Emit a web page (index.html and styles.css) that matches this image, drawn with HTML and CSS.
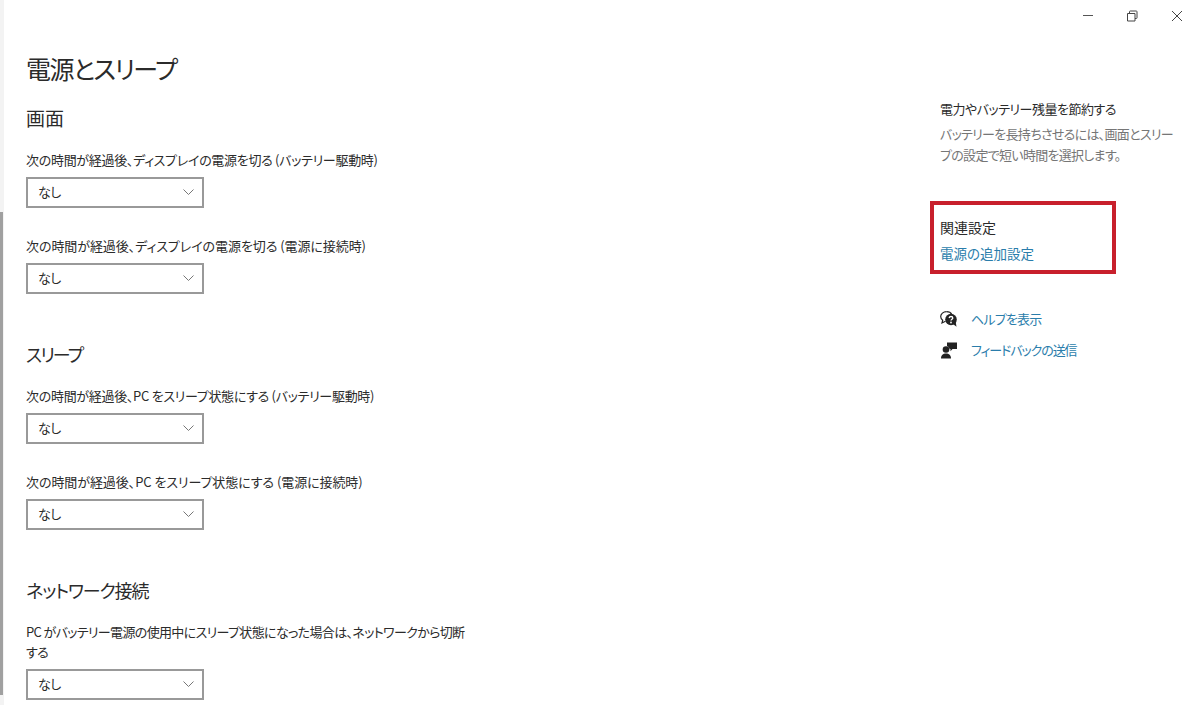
FILE: index.html
```html
<!DOCTYPE html>
<html lang="ja">
<head>
	<meta charset="utf-8">
	<title>電源とスリープ</title>
	<link rel="stylesheet" href="styles.css">
</head>
<body>
<div class="window">
	<div class="scrollbar"><div class="thumb"></div></div>

	<div class="titlebar">
		<svg class="winbtn" width="46" height="32" viewBox="0 0 46 32"><path d="M21 15.500h10" stroke="#555" fill="none"/></svg>
		<svg class="winbtn" width="46" height="32" viewBox="0 0 46 32"><path d="M19.500 13.500h7.500v7.500h-7.500zM21.500 13.500v-1.800q0-.7.7-.7h6.100q.7 0 .7.7v6.100q0 .7-.7.7h-1.300" stroke="#444" fill="none"/></svg>
		<svg class="winbtn" width="46" height="32" viewBox="0 0 46 32"><path d="M18 11l10 10M28 11l-10 10" stroke="#444" fill="none"/></svg>
	</div>

	<main class="content">
		<h1>電源とスリープ</h1>

		<section class="group">
			<h2 class="kanji">画面</h2>
			<div class="field">
				<p>次の時間が経過後、ディスプレイの電源を切る (バッテリー駆動時)</p>
				<div class="select">なし<svg width="11" height="6" viewBox="0 0 11 6"><path d="M.5.5L5.500 5.500 10.500.5" stroke="#777" fill="none"/></svg></div>
			</div>
			<div class="field">
				<p class="plugged">次の時間が経過後、ディスプレイの電源を切る (電源に接続時)</p>
				<div class="select">なし<svg width="11" height="6" viewBox="0 0 11 6"><path d="M.5.5L5.500 5.500 10.500.5" stroke="#777" fill="none"/></svg></div>
			</div>
		</section>

		<section class="group">
			<h2 class="sleep">スリープ</h2>
			<div class="field">
				<p>次の時間が経過後、PC をスリープ状態にする (バッテリー駆動時)</p>
				<div class="select">なし<svg width="11" height="6" viewBox="0 0 11 6"><path d="M.5.5L5.500 5.500 10.500.5" stroke="#777" fill="none"/></svg></div>
			</div>
			<div class="field">
				<p class="plugged">次の時間が経過後、PC をスリープ状態にする (電源に接続時)</p>
				<div class="select">なし<svg width="11" height="6" viewBox="0 0 11 6"><path d="M.5.5L5.500 5.500 10.500.5" stroke="#777" fill="none"/></svg></div>
			</div>
		</section>

		<section class="group">
			<h2>ネットワーク接続</h2>
			<div class="field">
				<p class="network">PC がバッテリー電源の使用中にスリープ状態になった場合は、ネットワークから切断<br>する</p>
				<div class="select">なし<svg width="11" height="6" viewBox="0 0 11 6"><path d="M.5.5L5.500 5.500 10.500.5" stroke="#777" fill="none"/></svg></div>
			</div>
		</section>
	</main>

	<aside class="side">
		<h3 class="save">電力やバッテリー残量を節約する</h3>
		<p class="hint">バッテリーを長持ちさせるには、画面とスリー<br>プの設定で短い時間を選択します。</p>

		<div class="related">
			<h3>関連設定</h3>
			<a href="#">電源の追加設定</a>
		</div>

		<div class="links">
			<div class="link">
				<svg width="18" height="17" viewBox="0 0 18 17"><path d="M6.500.7C3.300.7.7 2.800.7 5.600c0 1.500.8 2.800 2 3.600L2 12l3.500-1.700" stroke="#222" stroke-width="1.200" fill="none"/><path d="M6.500.7c2.400 0 4.400 1 5.300 2.800" stroke="#222" stroke-width="1.200" fill="none"/><circle cx="11" cy="8.500" r="5.800" fill="#222"/><path d="M13 13l3.500 2.800-.8-5z" fill="#222"/><path d="M9.100 7c.2-1 1-1.500 1.900-1.500s1.800.5 1.800 1.500c0 1.300-1.800 1.300-1.800 2.600" stroke="#fff" stroke-width="1.300" fill="none"/><circle cx="11" cy="11.500" r=".9" fill="#fff"/></svg>
				<a href="#">ヘルプを表示</a>
			</div>
			<div class="link">
				<svg width="18" height="17" viewBox="0 0 18 17"><circle cx="6" cy="7.500" r="3.300" fill="#222"/><path d="M1 16.500c0-3.500 2-5 5-5s5 1.500 5 5z" fill="#222"/><path d="M7 .5h10v6.500h-4.500l-2 2.200V7H9.500C9.300 5.500 8.300 4.500 7 4.200z" fill="#222"/></svg>
				<a href="#" class="tight">フィードバックの送信</a>
			</div>
		</div>
	</aside>
</div>
</body>
</html>
```

FILE: styles.css
```css
*{margin: 0; padding: 0; box-sizing: border-box;}
html, body{ height: 100%; overflow: hidden; }
body{
	background: #fff;
	color: #2b2b2b;
	font-family: "Noto Sans CJK JP", "Liberation Sans", sans-serif;
	font-feature-settings: "palt";
}
.window{
	display: flex;
	height: 715px;
	padding-left: 26px;
	position: relative;
}
.scrollbar{
	position: absolute; left: 0; top: 0;
	width: 4px; height: 705px;
	background: #f3f3f3;
}
.thumb{
	position: absolute; left: 0; top: 212px;
	width: 3px; height: 483px;
	background: #a0a0a0;
}
.titlebar{
	position: absolute; top: 0; right: 0;
	display: flex;
}
.winbtn{ display: block; }

.content{
	width: 914px;
	padding-top: 49px;
}
h1{
	font-size: 25px; font-weight: 400;
	letter-spacing: -1.5px;
	line-height: 38px;
	margin-bottom: 17px;
}
h2{
	font-size: 18px; font-weight: 400;
	letter-spacing: -1.1px;
	line-height: 28px;
	margin-bottom: 18px;
}
h2.kanji{ font-size: 19px; letter-spacing: 0; }
h2.sleep{ letter-spacing: -2px; }
.group{ margin-bottom: 46px; }
.field{ width: 460px; margin-bottom: 28px; }
.field:last-child{ margin-bottom: 0; }
.field p{
	font-size: 13px;
	letter-spacing: -.3px;
	line-height: 20px;
	margin-bottom: 7px;
}
.field p.plugged{ letter-spacing: -.07px; }
.field p.network{ letter-spacing: -.65px; }
.select{
	display: flex; justify-content: space-between; align-items: center;
	width: 178px; height: 31px;
	border: 2px solid #999;
	padding: 0 8px 2px 10px;
	font-size: 13px;
	letter-spacing: -.5px;
}

.side{
	width: 240px;
	padding-top: 99px;
}
h3{
	font-size: 14px; font-weight: 400;
	line-height: 20px;
}
h3.save{ font-size: 13px; letter-spacing: -.5px; }
.hint{
	font-size: 13px; color: #767676;
	letter-spacing: -.7px;
	line-height: 21px;
	margin-top: 4px;
}
a{
	color: #2a7dab; text-decoration: none;
	font-size: 13px; letter-spacing: -.8px;
	line-height: 20px;
}
a.tight{ letter-spacing: -1.1px; }
.related{
	width: 186px; height: 73px;
	margin: 36px 0 0 -10px;
	border: 4px solid #c8202c;
	padding: 12px 0 0 6px;
}
.related a{ display: block; margin-top: 6px; font-size: 13.5px; letter-spacing: 0; }
.links{
	margin-top: 35px;
	display: flex; flex-direction: column; gap: 11px;
}
.link{ display: flex; align-items: center; gap: 13px; }
```
